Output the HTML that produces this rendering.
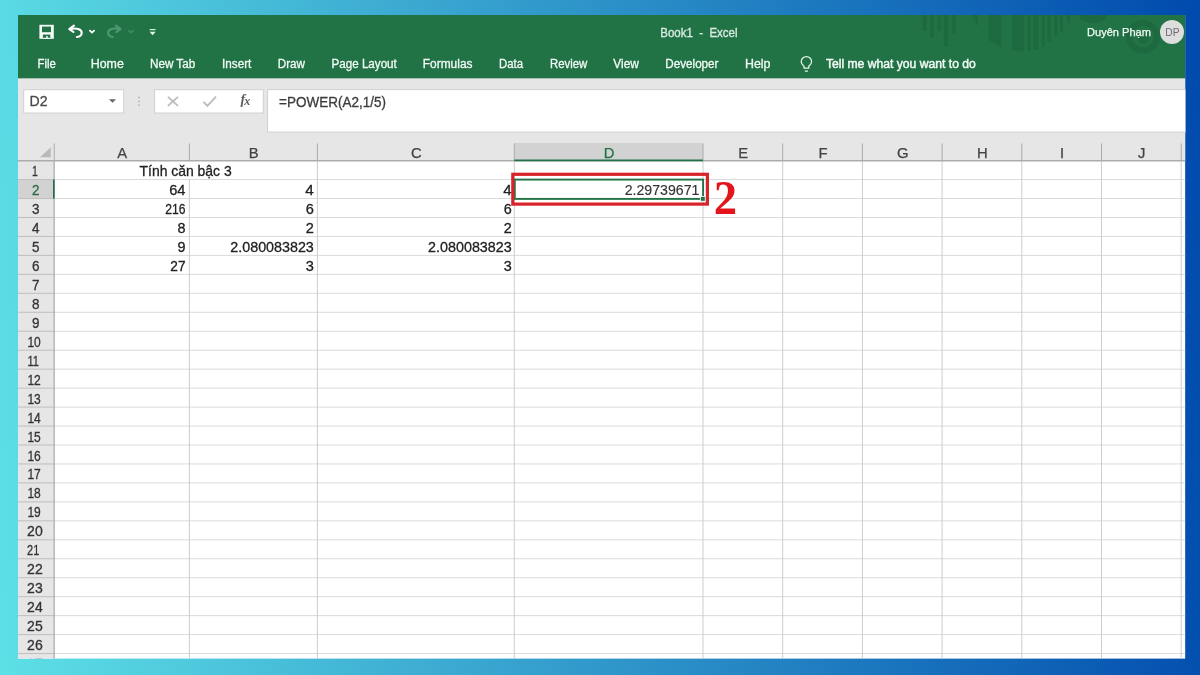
<!DOCTYPE html>
<html lang="vi"><head><meta charset="utf-8"><title>Book1 - Excel</title>
<style>
html,body{margin:0;padding:0}
body{width:1200px;height:675px;overflow:hidden;position:relative;background:linear-gradient(86deg,#5de0e6 0%,#004aad 100%)}
svg{position:absolute;left:0;top:0;display:block;will-change:transform}
text{font-family:"Liberation Sans",sans-serif;white-space:pre}
.serif{font-family:"Liberation Serif",serif;font-weight:bold}
</style></head><body>
<svg width="1200" height="675" viewBox="0 0 1200 675">
<defs><clipPath id="win"><rect x="18" y="15" width="1167.4" height="643.8"/></clipPath></defs>
<g clip-path="url(#win)">
<rect x="18.00" y="15.00" width="1167.40" height="643.80" fill="#ffffff"/>
<rect x="18.00" y="15.00" width="1167.40" height="63.60" fill="#217346"/>
<rect x="18.00" y="78.60" width="1167.40" height="81.60" fill="#e6e6e6"/>
<g fill="#1e6a40">
<rect x="922.5" y="15" width="4.2" height="15.8"/>
<rect x="930" y="15" width="4.0" height="22.5"/>
<rect x="937.5" y="15" width="3.5" height="16.0"/>
<rect x="943.7" y="15" width="4.6" height="31.7"/>
<rect x="951.7" y="15" width="4.1" height="19.0"/>
<rect x="1027.5" y="15" width="3.3" height="35.8"/>
<rect x="1033.3" y="15" width="5.0" height="35.0"/>
<rect x="1041.7" y="15" width="3.3" height="31.7"/>
<rect x="1047.5" y="15" width="3.3" height="26.7"/>
<rect x="1054" y="15" width="3.5" height="21.7"/>
<rect x="1060" y="15" width="3.0" height="16.7"/>
<rect x="1066.7" y="15" width="3.3" height="8.0"/>
<polygon points="971.7,15 978,15 978,26.7"/>
<polygon points="988.3,15 1001.3,15 1001.3,47.5 988.3,40"/>
<polygon points="1012,15 1024,15 1024,51.7 1012,50"/>
<path d="M1078.8 15 A14.4 9 0 0 0 1107.5 15 Z"/>
</g>
<circle cx="1143" cy="36.8" r="13.8" fill="none" stroke="#1e6a40" stroke-width="6.2"/>
<circle cx="1143.4" cy="38.6" r="5.2" fill="#1e6a40"/>
<rect x="39.4" y="24.8" width="14.4" height="14" fill="#f4fbf7"/>
<rect x="42" y="26.6" width="9" height="5.6" fill="#217346"/>
<rect x="42.9" y="34.6" width="7.4" height="3.3" fill="#217346"/>
<rect x="46.2" y="36" width="1.5" height="2.4" fill="#f4fbf7"/>
<rect x="42.9" y="37.9" width="7.4" height="0.9" fill="#f4fbf7"/>
<g fill="none" stroke="#ffffff" stroke-width="2.1" stroke-linecap="round" stroke-linejoin="round"><path d="M73.90 25.7 L69.30 29.2 L73.50 32"/><path d="M69.90 29.2 C76.30 27.6 81.90 29.2 81.70 33 C81.50 35.6 79.30 36.8 76.90 37"/></g>
<path d="M89.4 30.2 L92 32.6 L94.6 30.2" fill="none" stroke="#ffffff" stroke-width="1.7"/>
<g fill="none" stroke="#4c9873" stroke-width="2.1" stroke-linecap="round" stroke-linejoin="round"><path d="M115.90 25.7 L120.50 29.2 L116.30 32"/><path d="M119.90 29.2 C113.50 27.6 107.90 29.2 108.10 33 C108.30 35.6 110.50 36.8 112.90 37"/></g>
<path d="M128.4 30.2 L131 32.6 L133.6 30.2" fill="none" stroke="#3f8a63" stroke-width="1.7"/>
<rect x="149.7" y="29.1" width="5.8" height="1.05" fill="#e9fff3"/>
<polygon points="149.6,31.7 155.6,31.7 152.6,35.3" fill="#e9fff3"/>
<text x="660.30" y="37.00" font-size="12" fill="#dcebe3" textLength="77.20" lengthAdjust="spacingAndGlyphs" stroke="#dcebe3" stroke-width="0.3">Book1  -  Excel</text>
<text x="1087.00" y="36.00" font-size="11" fill="#f4fbf7" textLength="64.00" lengthAdjust="spacingAndGlyphs" stroke="#f4fbf7" stroke-width="0.25">Duyên Phạm</text>
<circle cx="1172" cy="32" r="12" fill="#dedede"/>
<text x="1165.30" y="36.00" font-size="11" fill="#6e6a6e" textLength="14.20" lengthAdjust="spacingAndGlyphs">DP</text>
<text x="37.50" y="67.90" font-size="12" fill="#f2faf5" textLength="18.30" lengthAdjust="spacingAndGlyphs" stroke="#f2faf5" stroke-width="0.3">File</text>
<text x="90.70" y="67.90" font-size="12" fill="#f2faf5" textLength="33.10" lengthAdjust="spacingAndGlyphs" stroke="#f2faf5" stroke-width="0.3">Home</text>
<text x="150.00" y="67.90" font-size="12" fill="#f2faf5" textLength="45.20" lengthAdjust="spacingAndGlyphs" stroke="#f2faf5" stroke-width="0.3">New Tab</text>
<text x="222.00" y="67.90" font-size="12" fill="#f2faf5" textLength="29.30" lengthAdjust="spacingAndGlyphs" stroke="#f2faf5" stroke-width="0.3">Insert</text>
<text x="277.80" y="67.90" font-size="12" fill="#f2faf5" textLength="27.20" lengthAdjust="spacingAndGlyphs" stroke="#f2faf5" stroke-width="0.3">Draw</text>
<text x="331.50" y="67.90" font-size="12" fill="#f2faf5" textLength="65.30" lengthAdjust="spacingAndGlyphs" stroke="#f2faf5" stroke-width="0.3">Page Layout</text>
<text x="422.80" y="67.90" font-size="12" fill="#f2faf5" textLength="49.70" lengthAdjust="spacingAndGlyphs" stroke="#f2faf5" stroke-width="0.3">Formulas</text>
<text x="499.00" y="67.90" font-size="12" fill="#f2faf5" textLength="24.00" lengthAdjust="spacingAndGlyphs" stroke="#f2faf5" stroke-width="0.3">Data</text>
<text x="550.00" y="67.90" font-size="12" fill="#f2faf5" textLength="37.30" lengthAdjust="spacingAndGlyphs" stroke="#f2faf5" stroke-width="0.3">Review</text>
<text x="613.30" y="67.90" font-size="12" fill="#f2faf5" textLength="25.50" lengthAdjust="spacingAndGlyphs" stroke="#f2faf5" stroke-width="0.3">View</text>
<text x="665.30" y="67.90" font-size="12" fill="#f2faf5" textLength="53.20" lengthAdjust="spacingAndGlyphs" stroke="#f2faf5" stroke-width="0.3">Developer</text>
<text x="745.00" y="67.90" font-size="12" fill="#f2faf5" textLength="25.50" lengthAdjust="spacingAndGlyphs" stroke="#f2faf5" stroke-width="0.3">Help</text>
<text x="825.90" y="67.90" font-size="12" fill="#f2faf5" textLength="149.90" lengthAdjust="spacingAndGlyphs" stroke="#f2faf5" stroke-width="0.45">Tell me what you want to do</text>
<g fill="none" stroke="#e8f6ee" stroke-width="1.25" stroke-linejoin="round"><path d="M804 68.2 V66.2 C802.4 64.9 801.2 63.5 801.2 61.7 A5.2 5.2 0 0 1 811.6 61.7 C811.6 63.5 810.4 64.9 808.8 66.2 V68.2 Z"/><path d="M804.9 71.2 H807.9"/></g>
<rect x="23.70" y="89.70" width="100.00" height="23.30" fill="#ffffff" stroke="#d0d0d0" stroke-width="1"/>
<text x="29.50" y="106.40" font-size="14.8" fill="#4a4a4a" textLength="18.00" lengthAdjust="spacingAndGlyphs" stroke="#4a4a4a" stroke-width="0.3">D2</text>
<polygon points="109,99.2 116,99.2 112.5,102.8" fill="#666666"/>
<rect x="138.3" y="96.8" width="1.5" height="1.5" fill="#b0b0b0"/>
<rect x="138.3" y="100.6" width="1.5" height="1.5" fill="#b0b0b0"/>
<rect x="138.3" y="104.4" width="1.5" height="1.5" fill="#b0b0b0"/>
<rect x="154.60" y="89.70" width="108.70" height="23.30" fill="#ffffff" stroke="#d0d0d0" stroke-width="1"/>
<path d="M167.9 96.8 L178 105.9 M178 96.8 L167.9 105.9" stroke="#bcbcbc" stroke-width="1.8" fill="none"/>
<path d="M203.4 101.8 L207.4 105.8 L216 96.6" stroke="#bcbcbc" stroke-width="1.9" fill="none"/>
<text x="240.6" y="103.7" font-size="14" fill="#5e5e5e" font-style="italic" class="serif">f</text>
<text x="244.3" y="105.2" font-size="12" fill="#5e5e5e" font-style="italic" class="serif">x</text>
<rect x="267.60" y="89.60" width="919.80" height="42.50" fill="#ffffff" stroke="#d0d0d0" stroke-width="1"/>
<text x="279.10" y="106.60" font-size="14.6" fill="#3c3c3c" textLength="106.90" lengthAdjust="spacingAndGlyphs" stroke="#3c3c3c" stroke-width="0.3">=POWER(A2,1/5)</text>
<rect x="514.30" y="143.00" width="188.70" height="17.60" fill="#d2d2d2"/>
<rect x="18.00" y="179.56" width="36.20" height="18.96" fill="#d2d2d2"/>
<rect x="18.00" y="160.60" width="36.20" height="498.20" fill="#e6e6e6"/>
<rect x="18.00" y="179.56" width="36.20" height="18.96" fill="#d2d2d2"/>
<line x1="54.20" y1="179.56" x2="1185.40" y2="179.56" stroke="#dadada" stroke-width="1"/>
<line x1="18.00" y1="179.56" x2="54.20" y2="179.56" stroke="#bebebe" stroke-width="1"/>
<line x1="54.20" y1="198.52" x2="1185.40" y2="198.52" stroke="#dadada" stroke-width="1"/>
<line x1="18.00" y1="198.52" x2="54.20" y2="198.52" stroke="#bebebe" stroke-width="1"/>
<line x1="54.20" y1="217.48" x2="1185.40" y2="217.48" stroke="#dadada" stroke-width="1"/>
<line x1="18.00" y1="217.48" x2="54.20" y2="217.48" stroke="#bebebe" stroke-width="1"/>
<line x1="54.20" y1="236.44" x2="1185.40" y2="236.44" stroke="#dadada" stroke-width="1"/>
<line x1="18.00" y1="236.44" x2="54.20" y2="236.44" stroke="#bebebe" stroke-width="1"/>
<line x1="54.20" y1="255.40" x2="1185.40" y2="255.40" stroke="#dadada" stroke-width="1"/>
<line x1="18.00" y1="255.40" x2="54.20" y2="255.40" stroke="#bebebe" stroke-width="1"/>
<line x1="54.20" y1="274.36" x2="1185.40" y2="274.36" stroke="#dadada" stroke-width="1"/>
<line x1="18.00" y1="274.36" x2="54.20" y2="274.36" stroke="#bebebe" stroke-width="1"/>
<line x1="54.20" y1="293.32" x2="1185.40" y2="293.32" stroke="#dadada" stroke-width="1"/>
<line x1="18.00" y1="293.32" x2="54.20" y2="293.32" stroke="#bebebe" stroke-width="1"/>
<line x1="54.20" y1="312.28" x2="1185.40" y2="312.28" stroke="#dadada" stroke-width="1"/>
<line x1="18.00" y1="312.28" x2="54.20" y2="312.28" stroke="#bebebe" stroke-width="1"/>
<line x1="54.20" y1="331.24" x2="1185.40" y2="331.24" stroke="#dadada" stroke-width="1"/>
<line x1="18.00" y1="331.24" x2="54.20" y2="331.24" stroke="#bebebe" stroke-width="1"/>
<line x1="54.20" y1="350.20" x2="1185.40" y2="350.20" stroke="#dadada" stroke-width="1"/>
<line x1="18.00" y1="350.20" x2="54.20" y2="350.20" stroke="#bebebe" stroke-width="1"/>
<line x1="54.20" y1="369.16" x2="1185.40" y2="369.16" stroke="#dadada" stroke-width="1"/>
<line x1="18.00" y1="369.16" x2="54.20" y2="369.16" stroke="#bebebe" stroke-width="1"/>
<line x1="54.20" y1="388.12" x2="1185.40" y2="388.12" stroke="#dadada" stroke-width="1"/>
<line x1="18.00" y1="388.12" x2="54.20" y2="388.12" stroke="#bebebe" stroke-width="1"/>
<line x1="54.20" y1="407.08" x2="1185.40" y2="407.08" stroke="#dadada" stroke-width="1"/>
<line x1="18.00" y1="407.08" x2="54.20" y2="407.08" stroke="#bebebe" stroke-width="1"/>
<line x1="54.20" y1="426.04" x2="1185.40" y2="426.04" stroke="#dadada" stroke-width="1"/>
<line x1="18.00" y1="426.04" x2="54.20" y2="426.04" stroke="#bebebe" stroke-width="1"/>
<line x1="54.20" y1="445.00" x2="1185.40" y2="445.00" stroke="#dadada" stroke-width="1"/>
<line x1="18.00" y1="445.00" x2="54.20" y2="445.00" stroke="#bebebe" stroke-width="1"/>
<line x1="54.20" y1="463.96" x2="1185.40" y2="463.96" stroke="#dadada" stroke-width="1"/>
<line x1="18.00" y1="463.96" x2="54.20" y2="463.96" stroke="#bebebe" stroke-width="1"/>
<line x1="54.20" y1="482.92" x2="1185.40" y2="482.92" stroke="#dadada" stroke-width="1"/>
<line x1="18.00" y1="482.92" x2="54.20" y2="482.92" stroke="#bebebe" stroke-width="1"/>
<line x1="54.20" y1="501.88" x2="1185.40" y2="501.88" stroke="#dadada" stroke-width="1"/>
<line x1="18.00" y1="501.88" x2="54.20" y2="501.88" stroke="#bebebe" stroke-width="1"/>
<line x1="54.20" y1="520.84" x2="1185.40" y2="520.84" stroke="#dadada" stroke-width="1"/>
<line x1="18.00" y1="520.84" x2="54.20" y2="520.84" stroke="#bebebe" stroke-width="1"/>
<line x1="54.20" y1="539.80" x2="1185.40" y2="539.80" stroke="#dadada" stroke-width="1"/>
<line x1="18.00" y1="539.80" x2="54.20" y2="539.80" stroke="#bebebe" stroke-width="1"/>
<line x1="54.20" y1="558.76" x2="1185.40" y2="558.76" stroke="#dadada" stroke-width="1"/>
<line x1="18.00" y1="558.76" x2="54.20" y2="558.76" stroke="#bebebe" stroke-width="1"/>
<line x1="54.20" y1="577.72" x2="1185.40" y2="577.72" stroke="#dadada" stroke-width="1"/>
<line x1="18.00" y1="577.72" x2="54.20" y2="577.72" stroke="#bebebe" stroke-width="1"/>
<line x1="54.20" y1="596.68" x2="1185.40" y2="596.68" stroke="#dadada" stroke-width="1"/>
<line x1="18.00" y1="596.68" x2="54.20" y2="596.68" stroke="#bebebe" stroke-width="1"/>
<line x1="54.20" y1="615.64" x2="1185.40" y2="615.64" stroke="#dadada" stroke-width="1"/>
<line x1="18.00" y1="615.64" x2="54.20" y2="615.64" stroke="#bebebe" stroke-width="1"/>
<line x1="54.20" y1="634.60" x2="1185.40" y2="634.60" stroke="#dadada" stroke-width="1"/>
<line x1="18.00" y1="634.60" x2="54.20" y2="634.60" stroke="#bebebe" stroke-width="1"/>
<line x1="54.20" y1="653.56" x2="1185.40" y2="653.56" stroke="#dadada" stroke-width="1"/>
<line x1="18.00" y1="653.56" x2="54.20" y2="653.56" stroke="#bebebe" stroke-width="1"/>
<line x1="54.20" y1="672.52" x2="1185.40" y2="672.52" stroke="#dadada" stroke-width="1"/>
<line x1="18.00" y1="672.52" x2="54.20" y2="672.52" stroke="#bebebe" stroke-width="1"/>
<line x1="189.40" y1="179.56" x2="189.40" y2="658.80" stroke="#cdcdcd" stroke-width="1"/>
<line x1="317.40" y1="160.60" x2="317.40" y2="658.80" stroke="#cdcdcd" stroke-width="1"/>
<line x1="514.30" y1="160.60" x2="514.30" y2="658.80" stroke="#cdcdcd" stroke-width="1"/>
<line x1="703.00" y1="160.60" x2="703.00" y2="658.80" stroke="#cdcdcd" stroke-width="1"/>
<line x1="782.70" y1="160.60" x2="782.70" y2="658.80" stroke="#cdcdcd" stroke-width="1"/>
<line x1="862.40" y1="160.60" x2="862.40" y2="658.80" stroke="#cdcdcd" stroke-width="1"/>
<line x1="942.10" y1="160.60" x2="942.10" y2="658.80" stroke="#cdcdcd" stroke-width="1"/>
<line x1="1021.80" y1="160.60" x2="1021.80" y2="658.80" stroke="#cdcdcd" stroke-width="1"/>
<line x1="1101.50" y1="160.60" x2="1101.50" y2="658.80" stroke="#cdcdcd" stroke-width="1"/>
<line x1="1181.20" y1="160.60" x2="1181.20" y2="658.80" stroke="#cdcdcd" stroke-width="1"/>
<line x1="54.20" y1="160.60" x2="54.20" y2="658.80" stroke="#adadad" stroke-width="1.3"/>
<line x1="54.20" y1="143.50" x2="54.20" y2="160.60" stroke="#ababab" stroke-width="1"/>
<line x1="189.40" y1="143.50" x2="189.40" y2="160.60" stroke="#ababab" stroke-width="1"/>
<line x1="317.40" y1="143.50" x2="317.40" y2="160.60" stroke="#ababab" stroke-width="1"/>
<line x1="514.30" y1="143.50" x2="514.30" y2="160.60" stroke="#ababab" stroke-width="1"/>
<line x1="703.00" y1="143.50" x2="703.00" y2="160.60" stroke="#ababab" stroke-width="1"/>
<line x1="782.70" y1="143.50" x2="782.70" y2="160.60" stroke="#ababab" stroke-width="1"/>
<line x1="862.40" y1="143.50" x2="862.40" y2="160.60" stroke="#ababab" stroke-width="1"/>
<line x1="942.10" y1="143.50" x2="942.10" y2="160.60" stroke="#ababab" stroke-width="1"/>
<line x1="1021.80" y1="143.50" x2="1021.80" y2="160.60" stroke="#ababab" stroke-width="1"/>
<line x1="1101.50" y1="143.50" x2="1101.50" y2="160.60" stroke="#ababab" stroke-width="1"/>
<line x1="1181.20" y1="143.50" x2="1181.20" y2="160.60" stroke="#ababab" stroke-width="1"/>
<line x1="18.00" y1="160.70" x2="1185.40" y2="160.70" stroke="#acacac" stroke-width="1.5"/>
<polygon points="50.8,147.2 50.8,157.2 40,157.2" fill="#b9b9b9"/>
<line x1="514.30" y1="160.30" x2="703.00" y2="160.30" stroke="#217346" stroke-width="1.8"/>
<line x1="53.80" y1="179.56" x2="53.80" y2="198.52" stroke="#217346" stroke-width="1.6"/>
<text x="122.20" y="157.8" font-size="14.8" text-anchor="middle" fill="#444444" stroke="#444444" stroke-width="0.25">A</text>
<text x="253.80" y="157.8" font-size="14.8" text-anchor="middle" fill="#444444" stroke="#444444" stroke-width="0.25">B</text>
<text x="416.25" y="157.8" font-size="14.8" text-anchor="middle" fill="#444444" stroke="#444444" stroke-width="0.25">C</text>
<text x="609.05" y="157.8" font-size="14.8" text-anchor="middle" fill="#217346" stroke="#217346" stroke-width="0.25">D</text>
<text x="743.25" y="157.8" font-size="14.8" text-anchor="middle" fill="#444444" stroke="#444444" stroke-width="0.25">E</text>
<text x="822.95" y="157.8" font-size="14.8" text-anchor="middle" fill="#444444" stroke="#444444" stroke-width="0.25">F</text>
<text x="902.65" y="157.8" font-size="14.8" text-anchor="middle" fill="#444444" stroke="#444444" stroke-width="0.25">G</text>
<text x="982.35" y="157.8" font-size="14.8" text-anchor="middle" fill="#444444" stroke="#444444" stroke-width="0.25">H</text>
<text x="1062.05" y="157.8" font-size="14.8" text-anchor="middle" fill="#444444" stroke="#444444" stroke-width="0.25">I</text>
<text x="1141.75" y="157.8" font-size="14.8" text-anchor="middle" fill="#444444" stroke="#444444" stroke-width="0.25">J</text>
<text x="31.90" y="176.10" font-size="15" fill="#333333" textLength="5.80" lengthAdjust="spacingAndGlyphs" stroke="#333333" stroke-width="0.3">1</text>
<text x="31.90" y="195.06" font-size="15" fill="#2f6b4a" textLength="7.50" lengthAdjust="spacingAndGlyphs" stroke="#2f6b4a" stroke-width="0.3">2</text>
<text x="31.90" y="214.02" font-size="15" fill="#333333" textLength="7.50" lengthAdjust="spacingAndGlyphs" stroke="#333333" stroke-width="0.3">3</text>
<text x="31.90" y="232.98" font-size="15" fill="#333333" textLength="7.50" lengthAdjust="spacingAndGlyphs" stroke="#333333" stroke-width="0.3">4</text>
<text x="31.90" y="251.94" font-size="15" fill="#333333" textLength="7.50" lengthAdjust="spacingAndGlyphs" stroke="#333333" stroke-width="0.3">5</text>
<text x="31.90" y="270.90" font-size="15" fill="#333333" textLength="7.50" lengthAdjust="spacingAndGlyphs" stroke="#333333" stroke-width="0.3">6</text>
<text x="31.90" y="289.86" font-size="15" fill="#333333" textLength="7.50" lengthAdjust="spacingAndGlyphs" stroke="#333333" stroke-width="0.3">7</text>
<text x="31.90" y="308.82" font-size="15" fill="#333333" textLength="7.50" lengthAdjust="spacingAndGlyphs" stroke="#333333" stroke-width="0.3">8</text>
<text x="31.90" y="327.78" font-size="15" fill="#333333" textLength="7.50" lengthAdjust="spacingAndGlyphs" stroke="#333333" stroke-width="0.3">9</text>
<text x="27.40" y="346.74" font-size="15" fill="#333333" textLength="13.40" lengthAdjust="spacingAndGlyphs" stroke="#333333" stroke-width="0.3">10</text>
<text x="27.40" y="365.70" font-size="15" fill="#333333" textLength="11.50" lengthAdjust="spacingAndGlyphs" stroke="#333333" stroke-width="0.3">11</text>
<text x="27.40" y="384.66" font-size="15" fill="#333333" textLength="13.40" lengthAdjust="spacingAndGlyphs" stroke="#333333" stroke-width="0.3">12</text>
<text x="27.40" y="403.62" font-size="15" fill="#333333" textLength="13.40" lengthAdjust="spacingAndGlyphs" stroke="#333333" stroke-width="0.3">13</text>
<text x="27.40" y="422.58" font-size="15" fill="#333333" textLength="13.40" lengthAdjust="spacingAndGlyphs" stroke="#333333" stroke-width="0.3">14</text>
<text x="27.40" y="441.54" font-size="15" fill="#333333" textLength="13.40" lengthAdjust="spacingAndGlyphs" stroke="#333333" stroke-width="0.3">15</text>
<text x="27.40" y="460.50" font-size="15" fill="#333333" textLength="13.40" lengthAdjust="spacingAndGlyphs" stroke="#333333" stroke-width="0.3">16</text>
<text x="27.40" y="479.46" font-size="15" fill="#333333" textLength="13.40" lengthAdjust="spacingAndGlyphs" stroke="#333333" stroke-width="0.3">17</text>
<text x="27.40" y="498.42" font-size="15" fill="#333333" textLength="13.40" lengthAdjust="spacingAndGlyphs" stroke="#333333" stroke-width="0.3">18</text>
<text x="27.40" y="517.38" font-size="15" fill="#333333" textLength="13.40" lengthAdjust="spacingAndGlyphs" stroke="#333333" stroke-width="0.3">19</text>
<text x="27.10" y="536.34" font-size="15" fill="#333333" textLength="15.60" lengthAdjust="spacingAndGlyphs" stroke="#333333" stroke-width="0.3">20</text>
<text x="27.10" y="555.30" font-size="15" fill="#333333" textLength="12.20" lengthAdjust="spacingAndGlyphs" stroke="#333333" stroke-width="0.3">21</text>
<text x="27.10" y="574.26" font-size="15" fill="#333333" textLength="15.60" lengthAdjust="spacingAndGlyphs" stroke="#333333" stroke-width="0.3">22</text>
<text x="27.10" y="593.22" font-size="15" fill="#333333" textLength="15.60" lengthAdjust="spacingAndGlyphs" stroke="#333333" stroke-width="0.3">23</text>
<text x="27.10" y="612.18" font-size="15" fill="#333333" textLength="15.60" lengthAdjust="spacingAndGlyphs" stroke="#333333" stroke-width="0.3">24</text>
<text x="27.10" y="631.14" font-size="15" fill="#333333" textLength="15.60" lengthAdjust="spacingAndGlyphs" stroke="#333333" stroke-width="0.3">25</text>
<text x="27.10" y="650.10" font-size="15" fill="#333333" textLength="15.60" lengthAdjust="spacingAndGlyphs" stroke="#333333" stroke-width="0.3">26</text>
<text x="27.10" y="669.06" font-size="15" fill="#333333" textLength="15.60" lengthAdjust="spacingAndGlyphs" stroke="#333333" stroke-width="0.3">27</text>
<text x="139.50" y="176.20" font-size="15" fill="#222222" textLength="92.20" lengthAdjust="spacingAndGlyphs" stroke="#222222" stroke-width="0.3">Tính căn bậc 3</text>
<text x="169.20" y="195.06" font-size="15" fill="#222222" textLength="16.30" lengthAdjust="spacingAndGlyphs" stroke="#222222" stroke-width="0.3">64</text>
<text x="165.30" y="214.02" font-size="15" fill="#222222" textLength="20.20" lengthAdjust="spacingAndGlyphs" stroke="#222222" stroke-width="0.3">216</text>
<text x="177.50" y="232.98" font-size="15" fill="#222222" textLength="8.00" lengthAdjust="spacingAndGlyphs" stroke="#222222" stroke-width="0.3">8</text>
<text x="177.50" y="251.94" font-size="15" fill="#222222" textLength="8.00" lengthAdjust="spacingAndGlyphs" stroke="#222222" stroke-width="0.3">9</text>
<text x="170.30" y="270.90" font-size="15" fill="#222222" textLength="15.20" lengthAdjust="spacingAndGlyphs" stroke="#222222" stroke-width="0.3">27</text>
<text x="305.30" y="195.06" font-size="15" fill="#222222" textLength="8.50" lengthAdjust="spacingAndGlyphs" stroke="#222222" stroke-width="0.3">4</text>
<text x="305.70" y="214.02" font-size="15" fill="#222222" textLength="8.10" lengthAdjust="spacingAndGlyphs" stroke="#222222" stroke-width="0.3">6</text>
<text x="305.70" y="232.98" font-size="15" fill="#222222" textLength="8.10" lengthAdjust="spacingAndGlyphs" stroke="#222222" stroke-width="0.3">2</text>
<text x="230.30" y="251.94" font-size="15" fill="#222222" textLength="83.50" lengthAdjust="spacingAndGlyphs" stroke="#222222" stroke-width="0.3">2.080083823</text>
<text x="305.70" y="270.90" font-size="15" fill="#222222" textLength="8.10" lengthAdjust="spacingAndGlyphs" stroke="#222222" stroke-width="0.3">3</text>
<text x="503.30" y="195.06" font-size="15" fill="#222222" textLength="8.40" lengthAdjust="spacingAndGlyphs" stroke="#222222" stroke-width="0.3">4</text>
<text x="503.70" y="214.02" font-size="15" fill="#222222" textLength="8.00" lengthAdjust="spacingAndGlyphs" stroke="#222222" stroke-width="0.3">6</text>
<text x="503.70" y="232.98" font-size="15" fill="#222222" textLength="8.00" lengthAdjust="spacingAndGlyphs" stroke="#222222" stroke-width="0.3">2</text>
<text x="428.10" y="251.94" font-size="15" fill="#222222" textLength="83.60" lengthAdjust="spacingAndGlyphs" stroke="#222222" stroke-width="0.3">2.080083823</text>
<text x="503.70" y="270.90" font-size="15" fill="#222222" textLength="8.00" lengthAdjust="spacingAndGlyphs" stroke="#222222" stroke-width="0.3">3</text>
<text x="624.70" y="195.30" font-size="14.8" fill="#333333" textLength="74.80" lengthAdjust="spacingAndGlyphs" stroke="#333333" stroke-width="0.15">2.29739671</text>
<rect x="514.80" y="179.6" width="188.30" height="19.3" fill="none" stroke="#217346" stroke-width="1.9"/>
<rect x="700.40" y="196.40" width="4.80" height="4.80" fill="#217346" stroke="#ffffff" stroke-width="0.8"/>
<rect x="512.8" y="174.3" width="194.6" height="29.8" fill="none" stroke="#d8232a" stroke-width="3.2"/>
<text transform="translate(713.8 213.8) scale(0.98 1)" x="0" y="0" font-size="47.6" fill="#e3141c" class="serif">2</text>
</g></svg></body></html>
